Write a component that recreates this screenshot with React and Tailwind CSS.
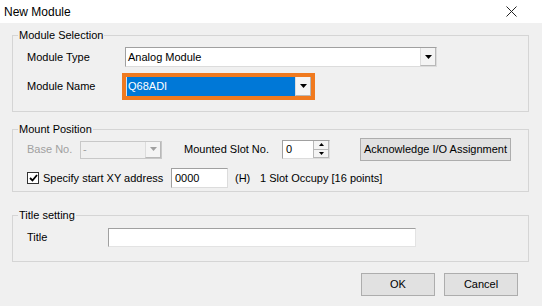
import React from "react";

function Arrow({ color = "#000" }) {
  return (
    <svg width="7" height="4" viewBox="0 0 7 4">
      <path d="M0 0h7L3.5 4z" fill={color} />
    </svg>
  );
}

function DropButton({ disabled }) {
  return (
    <div className="w-[16px] h-full flex items-center justify-center bg-[#f4f4f4] border-l border-l-[#dcdcdc] border-b border-b-[#b8b8b8] border-r border-r-[#b8b8b8]">
      <Arrow color={disabled ? "#a0a0a0" : "#000"} />
    </div>
  );
}

function Group({ title, className, children }) {
  return (
    <fieldset className={`border border-[#d5d5d5] px-[5px] ${className}`}>
      <legend className="px-[1px] leading-[14px]">{title}</legend>
      <div className="pl-[9px]">{children}</div>
    </fieldset>
  );
}

function Button({ children, className }) {
  return (
    <button className={`h-[23px] flex items-center justify-center bg-[#e1e1e1] border border-[#adadad] text-black ${className}`}>
      {children}
    </button>
  );
}

export default function App() {
  return (
    <div className="w-[542px] h-[306px] bg-[#f0f0f0] flex flex-col overflow-hidden text-[11px] text-black font-['Liberation_Sans',Arial,sans-serif]">
      {/* title bar */}
      <div className="h-[23px] bg-white flex items-center justify-between pl-[4px] pr-[25px]">
        <span className="text-[12px]">New Module</span>
        <svg width="11" height="11" viewBox="0 0 11 11">
          <path d="M0.5 0.5L10.5 10.5M10.5 0.5L0.5 10.5" stroke="#222" strokeWidth="1" />
        </svg>
      </div>

      <div className="flex flex-col pl-[12px] pr-[13px]">
        <Group title="Module Selection" className="mt-[5px] pb-[11px]">
          <div className="flex items-center h-[20px] mt-[5px]">
            <span className="w-[98px]">Module Type</span>
            <div className="w-[312px] h-[20px] flex bg-white border border-[#a0a0a0] border-r-[#dcdcdc] border-b-[#dcdcdc]">
              <span className="flex-1 pl-[2px] flex items-center">Analog Module</span>
              <DropButton />
            </div>
          </div>
          <div className="flex items-center mt-[6px]">
            <span className="w-[95px]">Module Name</span>
            <div className="w-[193px] h-[27px] flex border-[4px] border-[#f07a1f]">
              <span className="flex-1 bg-[#0078d7] text-white border-l border-l-[#cfe3f5] pl-[1px] flex items-center">
                Q68ADI
              </span>
              <DropButton />
            </div>
          </div>
        </Group>

        <Group title="Mount Position" className="mt-[10px] pb-[3px]">
          <div className="flex items-center h-[23px] mt-[2px]">
            <span className="w-[53px] text-[#a0a0a0]">Base No.</span>
            <div className="w-[82px] h-[18px] flex bg-[#f0f0f0] border border-[#c8c8c8]">
              <span className="flex-1 pl-[2px] flex items-center text-[#a0a0a0]">-</span>
              <DropButton disabled />
            </div>
            <span className="ml-[22px] w-[98px]">Mounted Slot No.</span>
            <div className="w-[48px] h-[19px] flex bg-white border border-[#a0a0a0] border-r-[#dcdcdc] border-b-[#dcdcdc]">
              <span className="flex-1 pl-[3px] flex items-center">0</span>
              <div className="w-[16px] flex flex-col">
                <div className="flex-1 flex items-center justify-center bg-[#f4f4f4] border border-[#b8b8b8] border-t-0">
                  <svg width="5" height="3" viewBox="0 0 5 3"><path d="M2.5 0L5 3H0z" fill="#000" /></svg>
                </div>
                <div className="flex-1 flex items-center justify-center bg-[#f4f4f4] border border-[#b8b8b8] border-t-0">
                  <svg width="5" height="3" viewBox="0 0 5 3"><path d="M0 0h5L2.5 3z" fill="#000" /></svg>
                </div>
              </div>
            </div>
            <Button className="ml-[30px] w-[151px]">Acknowledge I/O Assignment</Button>
          </div>
          <div className="flex items-center h-[20px] mt-[7px]">
            <div className="w-[12px] h-[12px] bg-white border border-[#333] flex items-center justify-center">
              <svg width="9" height="8" viewBox="0 0 9 8">
                <path d="M1 4l2.5 2.5L8 1" stroke="#000" strokeWidth="1.8" fill="none" />
              </svg>
            </div>
            <span className="ml-[4px] w-[128px]">Specify start XY address</span>
            <div className="w-[57px] h-[20px] bg-white border border-[#a0a0a0] border-r-[#dcdcdc] border-b-[#dcdcdc] pl-[3px] flex items-center">
              0000
            </div>
            <span className="ml-[7px] w-[25px]">(H)</span>
            <span>1 Slot Occupy [16 points]</span>
          </div>
        </Group>

        <Group title="Title setting" className="mt-[16px] pb-[14px]">
          <div className="flex items-center mt-[6px]">
            <span className="w-[81px]">Title</span>
            <div className="w-[308px] h-[19px] bg-white border border-[#a0a0a0] border-r-[#e3e3e3] border-b-[#e3e3e3]" />
          </div>
        </Group>

        <div className="flex justify-end gap-[9px] mt-[11px] mr-[11px]">
          <Button className="w-[74px] border-[#6f6f6f]">OK</Button>
          <Button className="w-[74px]">Cancel</Button>
        </div>
      </div>
    </div>
  );
}
